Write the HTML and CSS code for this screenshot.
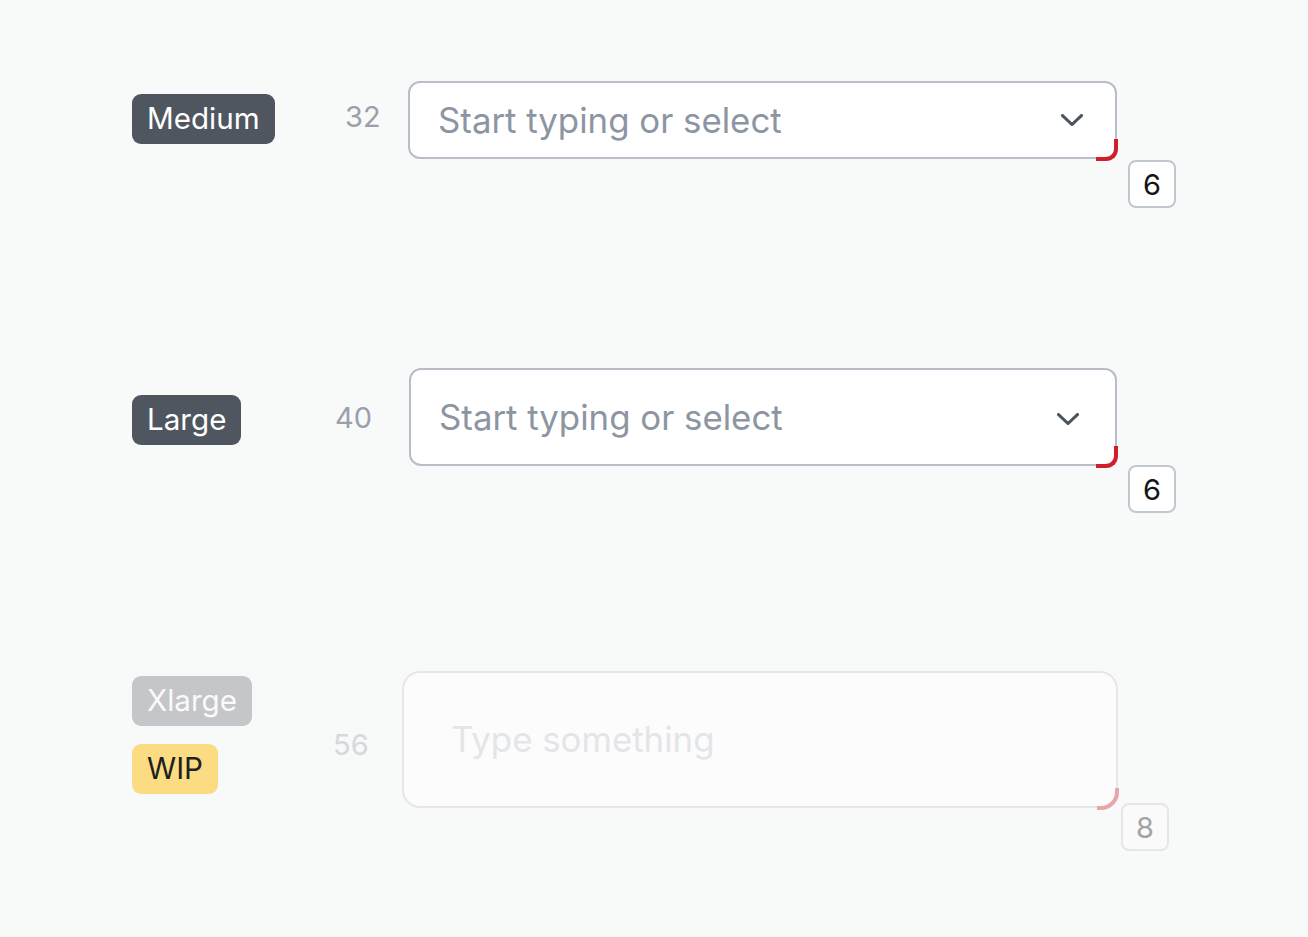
FILE: index.html
```html
<!DOCTYPE html>
<html lang="en">
<head>
<meta charset="utf-8">
<title>Select sizes</title>
<link rel="stylesheet" href="styles.css">
</head>
<body>
<main class="page">
  <section class="row row-medium">
    <div class="labels"><span class="badge badge-dark">Medium</span></div>
    <div class="num">32</div>
    <div class="field-wrap">
      <div class="field">
        <span class="placeholder">Start typing or select</span>
        <svg class="chevron" width="22" height="12" viewBox="0 0 22 12"><polyline points="1.5,1.5 11,10.5 20.5,1.5" fill="none" stroke="#4b5360" stroke-width="3" stroke-linecap="square"/></svg>
      </div>
      <span class="corner"></span>
      <span class="radius-tag">6</span>
    </div>
  </section>

  <section class="row row-large">
    <div class="labels"><span class="badge badge-dark">Large</span></div>
    <div class="num">40</div>
    <div class="field-wrap">
      <div class="field">
        <span class="placeholder">Start typing or select</span>
        <svg class="chevron" width="22" height="12" viewBox="0 0 22 12"><polyline points="1.5,1.5 11,10.5 20.5,1.5" fill="none" stroke="#4b5360" stroke-width="3" stroke-linecap="square"/></svg>
      </div>
      <span class="corner"></span>
      <span class="radius-tag">6</span>
    </div>
  </section>

  <section class="row row-xlarge">
    <div class="labels">
      <span class="badge badge-muted">Xlarge</span>
      <span class="badge badge-wip">WIP</span>
    </div>
    <div class="num">56</div>
    <div class="field-wrap">
      <div class="field">
        <span class="placeholder">Type something</span>
      </div>
      <span class="corner"></span>
      <span class="radius-tag">8</span>
    </div>
  </section>
</main>
</body>
</html>
```

FILE: styles.css
```css
* { box-sizing: border-box; }
html, body { margin: 0; padding: 0; }
body {
  background: #f8f9f9;
  font-family: Inter, "Noto Sans", "Liberation Sans", sans-serif;
  width: 1308px;
  height: 937px;
  overflow: hidden;
}
.page {
  padding: 81px 0 0 132px;
  display: flex;
  flex-direction: column;
}
.row {
  display: flex;
  align-items: center;
}
.labels {
  width: 200px;
  display: flex;
  flex-direction: column;
  align-items: flex-start;
  gap: 18px;
}
.badge {
  display: inline-flex;
  align-items: center;
  height: 50px;
  padding: 0 15px 0 15px;
  border-radius: 9px;
  font-size: 29.6px;
  line-height: 1;
  color: #ffffff;
}
.badge-dark { background: #4f5660; }
.badge-muted { background: #c5c6ca; color: #fafafa; }
.badge-wip { background: #fcdc82; color: #1d1f23; }

.num {
  font-size: 29px;
  color: #9aa0ab;
  line-height: 1;
}
.field-wrap { position: relative; }
.field {
  display: flex;
  align-items: center;
  justify-content: space-between;
  background: #ffffff;
  border: 2px solid #b9bdc7;
  border-radius: 12px;
}
.placeholder {
  font-size: 34.8px;
  color: #8c95a1;
  line-height: 1;
}
.corner {
  position: absolute;
  right: -1px;
  bottom: -2px;
  width: 22px;
  height: 22px;
  border-right: 4px solid #d01f2a;
  border-bottom: 4px solid #d01f2a;
  border-bottom-right-radius: 12px;
}
.radius-tag {
  position: absolute;
  width: 48px;
  height: 48px;
  display: flex;
  align-items: center;
  justify-content: center;
  background: #ffffff;
  border: 2px solid #c3c7cf;
  border-radius: 8px;
  font-size: 29px;
  color: #141414;
}

/* Medium */
.row-medium .labels { padding-bottom: 2px; }
.row-medium .num { width: 76px; padding-left: 13px; margin-bottom: 8px; }
.row-medium .field { width: 709px; height: 78px; padding: 0 32px 0 28px; }
.row-medium .radius-tag { left: calc(100% + 11px); top: calc(100% + 1px); }

/* Large */
.row-large { margin-top: 209px; }
.row-large .labels { padding-top: 6px; }
.row-large .num { width: 77px; padding-left: 3px; }
.row-large .field { width: 708px; height: 98px; padding: 0 36px 0 28px; }
.row-large .chevron { margin-top: 4px; }
.row-large .radius-tag { left: calc(100% + 11px); top: calc(100% - 1px); }

/* Xlarge */
.row-xlarge { margin-top: 205px; }
.row-xlarge .labels { padding-bottom: 9px; }
.row-xlarge .num { width: 70px; padding-left: 1px; padding-top: 10px; color: #d6d8dc; }
.row-xlarge .field {
  width: 716px;
  height: 137px;
  padding: 0 30px 0 47px;
  border-color: #e6e7ea;
  background: #fcfcfc;
  border-radius: 18px;
}
.row-xlarge .placeholder { color: #e3e5e9; }
.row-xlarge .corner {
  border-color: #e9a5a9;
  border-bottom-right-radius: 18px;
}
.row-xlarge .radius-tag {
  left: calc(100% + 3px);
  top: calc(100% - 5px);
  border-color: #e4e6e9;
  color: #a3a3a3;
  background: #fafafa;
}
```
